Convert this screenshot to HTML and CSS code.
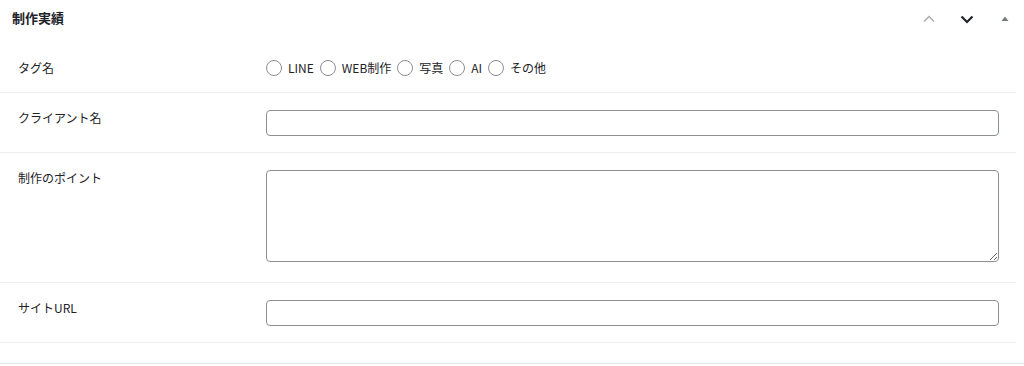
FILE: index.html
```html
<!DOCTYPE html>
<html lang="ja">
<head>
    <meta charset="UTF-8">
    <meta name="viewport" content="width=device-width, initial-scale=1.0">
    <title>制作実績</title>
    <link rel="stylesheet" href="styles.css">
</head>
<body>
    <div class="postbox">
        <div class="postbox-header">
            <h2 class="postbox-title">制作実績</h2>
            <div class="handle-actions">
                <button class="handle-btn" aria-label="上へ移動">
                    <svg width="14" height="14" viewBox="0 0 14 14"><path d="M2 9.5 L7 4.5 L12 9.5" fill="none" stroke="#a7aaad" stroke-width="1.3"/></svg>
                </button>
                <button class="handle-btn" aria-label="下へ移動">
                    <svg width="14" height="14" viewBox="0 0 14 14"><path d="M1.5 4.5 L7 10 L12.5 4.5" fill="none" stroke="#1d2327" stroke-width="2.2"/></svg>
                </button>
                <button class="handle-btn toggle" aria-label="パネルを切り替え">
                    <svg width="10" height="10" viewBox="0 0 10 10"><path d="M5 2.5 L8.5 7 L1.5 7 Z" fill="#787c82"/></svg>
                </button>
            </div>
        </div>

        <div class="fields">
            <div class="field field-radio">
                <div class="field-label">タグ名</div>
                <div class="field-input">
                    <ul class="radio-list">
                        <li><label><input type="radio" name="tag"> LINE</label></li>
                        <li><label><input type="radio" name="tag"> WEB制作</label></li>
                        <li><label><input type="radio" name="tag"> 写真</label></li>
                        <li><label><input type="radio" name="tag"> AI</label></li>
                        <li><label><input type="radio" name="tag"> その他</label></li>
                    </ul>
                </div>
            </div>
            <div class="field">
                <div class="field-label">クライアント名</div>
                <div class="field-input"><input type="text" class="text-input"></div>
            </div>
            <div class="field">
                <div class="field-label">制作のポイント</div>
                <div class="field-input"><textarea class="textarea-input"></textarea></div>
            </div>
            <div class="field">
                <div class="field-label">サイトURL</div>
                <div class="field-input"><input type="text" class="text-input"></div>
            </div>
        </div>
    </div>
</body>
</html>
```

FILE: styles.css
```css
* {
    margin: 0;
    padding: 0;
    box-sizing: border-box;
}

body {
    background-color: #fff;
    color: #1d2327;
    font-family: "Noto Sans CJK JP", "Noto Sans", sans-serif;
    font-size: 12px;
}

.postbox {
    width: 1024px;
    height: 364px;
    border-bottom: 1px solid #e2e2e2;
}

.postbox-header {
    height: 44px;
    display: flex;
    justify-content: space-between;
    align-items: flex-start;
}

.postbox-title {
    font-size: 13px;
    font-weight: bold;
    line-height: 18px;
    padding: 9px 12px;
    color: #1d2327;
}

.handle-actions {
    display: flex;
    padding-top: 11px;
}

.handle-btn {
    width: 38px;
    height: 16px;
    border: none;
    background: none;
    display: flex;
    align-items: center;
    justify-content: center;
}

.fields {
    width: 1016px;
}

.field {
    display: grid;
    grid-template-columns: 248px 1fr;
    padding: 16px 17px 16px 18px;
    border-bottom: 1px solid #eeeeee;
}

.field-label {
    line-height: 16px;
    padding-top: 1px;
    font-size: 12px;
    color: #1d2327;
}

.field-radio .field-label {
    padding-top: 0;
}

.radio-list {
    list-style: none;
    display: flex;
    line-height: 16px;
}

.radio-list li {
    margin-right: 6px;
}

.radio-list label {
    display: flex;
    align-items: center;
    font-size: 12px;
}

.radio-list input {
    appearance: none;
    width: 16px;
    height: 16px;
    border: 1px solid #8c8f94;
    border-radius: 50%;
    margin-right: 6px;
    background: #fff;
}

.text-input {
    display: block;
    width: 100%;
    height: 26px;
    margin-top: 1px;
    border: 1px solid #8c8f94;
    border-radius: 4px;
    background: #fff;
}

.textarea-input {
    display: block;
    width: 100%;
    height: 92px;
    margin-top: 1px;
    margin-bottom: 4px;
    border: 1px solid #8c8f94;
    border-radius: 4px;
    background: #fff;
    resize: vertical;
}
```
